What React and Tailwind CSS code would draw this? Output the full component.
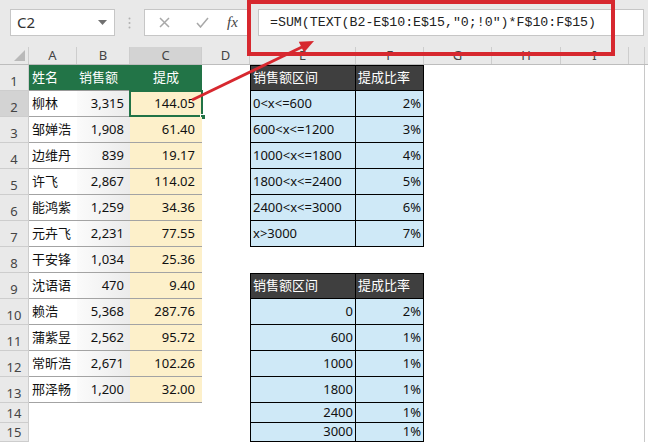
import clsx from "clsx";

const people = [
  ["柳林", "3,315", "144.05"],
  ["邹婵浩", "1,908", "61.40"],
  ["边维丹", "839", "19.17"],
  ["许飞", "2,867", "114.02"],
  ["能鸿紫", "1,259", "34.36"],
  ["元卉飞", "2,231", "77.55"],
  ["干安锋", "1,034", "25.36"],
  ["沈语语", "470", "9.40"],
  ["赖浩", "5,368", "287.76"],
  ["蒲紫昱", "2,562", "95.72"],
  ["常昕浩", "2,671", "102.26"],
  ["邢泽畅", "1,200", "32.00"],
];

const bands = [
  ["0<x<=600", "2%"],
  ["600<x<=1200", "3%"],
  ["1000<x<=1800", "4%"],
  ["1800<x<=2400", "5%"],
  ["2400<x<=3000", "6%"],
  ["x>3000", "7%"],
];

const steps = [
  ["0", "2%"],
  ["600", "1%"],
  ["1000", "1%"],
  ["1800", "1%"],
  ["2400", "1%"],
  ["3000", "1%"],
];

const rows = [1, 2, 3, 4, 5, 6, 7, 8, 9, 10, 11, 12, 13, 14, 15];

function RowHead({ n }) {
  return (
    <div
      className={clsx(
        "w-[29px] shrink-0 border-r border-b border-[#cdcdcd] flex items-end justify-center pb-[2px] text-[13px] leading-none text-[#444]",
        n === 2 ? "bg-[#d3d3d3]" : "bg-[#e9e9e9]"
      )}
    >
      {n}
    </div>
  );
}

function PeopleCells({ r }) {
  if (r === 1) {
    return (
      <>
        <div className="w-[48px] shrink-0 bg-[#227447] text-white border-b border-[#9a9a9a] flex items-center pl-[3px]">姓名</div>
        <div className="w-[53px] shrink-0 bg-[#227447] text-white border-b border-[#9a9a9a] flex items-center pl-[2px]">销售额</div>
        <div className="w-[72px] shrink-0 bg-[#227447] text-white border-b border-[#9a9a9a] flex items-center justify-center">提成</div>
      </>
    );
  }
  const p = people[r - 2];
  if (!p) {
    return (
      <>
        <div className="w-[48px] shrink-0" />
        <div className="w-[53px] shrink-0" />
        <div className="w-[72px] shrink-0" />
      </>
    );
  }
  return (
    <>
      <div className="w-[48px] shrink-0 bg-white border-b border-[#a3a3a3] flex items-center pl-[3px]">{p[0]}</div>
      <div className="w-[53px] shrink-0 bg-gradient-to-r from-[#fbfbfb] to-[#ebebeb] border-b border-[#a3a3a3] flex items-center justify-end pr-[6px]">{p[1]}</div>
      <div className="w-[72px] shrink-0 relative bg-[#fdf0ca] border-b border-[#a3a3a3] flex items-center justify-end pr-[7px]">
        {p[2]}
        {r === 2 && (
          <>
            <div className="absolute inset-[-1px] border-2 border-[#217346]" />
            <div className="absolute right-[-4px] bottom-[-4px] w-[6px] h-[6px] bg-[#217346] border border-white" />
          </>
        )}
      </div>
    </>
  );
}

function RateCells({ r }) {
  if (r === 1 || r === 9) {
    return (
      <>
        <div className="w-[106px] shrink-0 bg-[#3f3f3f] text-white border border-black flex items-center pl-[2px]">销售额区间</div>
        <div className="w-[68px] shrink-0 bg-[#3f3f3f] text-white border-y border-r border-black flex items-center pl-[2px]">提成比率</div>
      </>
    );
  }
  if (r >= 2 && r <= 7) {
    const b = bands[r - 2];
    return (
      <>
        <div className="w-[106px] shrink-0 bg-[#cfe9f7] border-x border-b border-black flex items-center pl-[2px]">{b[0]}</div>
        <div className="w-[68px] shrink-0 bg-[#cfe9f7] border-r border-b border-black flex items-center justify-end pr-[2px]">{b[1]}</div>
      </>
    );
  }
  if (r >= 10) {
    const s = steps[r - 10];
    return (
      <>
        <div className="w-[106px] shrink-0 bg-[#cfe9f7] border-x border-b border-black flex items-center justify-end pr-[2px]">{s[0]}</div>
        <div className="w-[68px] shrink-0 bg-[#cfe9f7] border-r border-b border-black flex items-center justify-end pr-[2px]">{s[1]}</div>
      </>
    );
  }
  return (
    <>
      <div className="w-[106px] shrink-0" />
      <div className="w-[68px] shrink-0" />
    </>
  );
}

export default function App() {
  return (
    <div className="relative w-[648px] h-[444px] overflow-hidden bg-white text-[13px] text-[#111] font-['Noto_Sans','Noto_Sans_CJK_SC',sans-serif]">
      {/* name box + formula bar */}
      <div className="h-[47px] bg-[#e9e9e9] flex items-start pt-[9px]">
        <div className="ml-[10px] w-[105px] h-[27px] bg-white border border-[#c6c6c6] flex items-center justify-between pl-[6px] pr-[7px]">
          <span className="text-[15px] text-[#333]">C2</span>
          <svg width="9" height="5" viewBox="0 0 9 5">
            <path d="M0 0h9L4.5 5z" fill="#707070" />
          </svg>
        </div>
        <div className="w-[29px] h-[27px] flex items-center justify-center">
          <svg width="3" height="12" viewBox="0 0 3 12">
            <circle cx="1.5" cy="1.5" r="1" fill="#b0b0b0" />
            <circle cx="1.5" cy="6" r="1" fill="#b0b0b0" />
            <circle cx="1.5" cy="10.5" r="1" fill="#b0b0b0" />
          </svg>
        </div>
        <div className="w-[104px] h-[27px] bg-white border border-[#c6c6c6] flex items-center pl-[14px]">
          <svg width="11" height="11" viewBox="0 0 11 11">
            <path d="M1 1l9 9M10 1l-9 9" stroke="#a8a8a8" strokeWidth="1.5" />
          </svg>
          <svg className="ml-[26px]" width="13" height="11" viewBox="0 0 13 11">
            <path d="M1 6l3.5 4L12 1" stroke="#a8a8a8" strokeWidth="1.5" fill="none" />
          </svg>
          <span className="ml-[18px] font-['Liberation_Serif',serif] italic text-[15px] text-[#444]">fx</span>
        </div>
        <div className="ml-[10px] mr-[4px] flex-1 h-[27px] bg-white border border-[#c6c6c6] flex items-center pl-[11px] font-['Liberation_Mono',monospace] text-[13.25px] text-[#222]">
          =SUM(TEXT(B2-E$10:E$15,"0;!0")*F$10:F$15)
        </div>
      </div>

      {/* column headers */}
      <div className="h-[18px] flex bg-[#e9e9e9] border-b border-[#bdbdbd] text-[13px] leading-none text-[#444]">
        <div className="w-[29px] shrink-0 border-r border-[#cdcdcd] flex items-end justify-end pr-[3px] pb-[3px]">
          <svg width="11" height="11" viewBox="0 0 11 11">
            <path d="M11 0v11H0z" fill="#b9b9b9" />
          </svg>
        </div>
        <div className="w-[48px] shrink-0 border-r border-[#cdcdcd] flex items-center justify-center">A</div>
        <div className="w-[53px] shrink-0 border-r border-[#cdcdcd] flex items-center justify-center">B</div>
        <div className="w-[72px] shrink-0 border-r border-[#cdcdcd] bg-[#d3d3d3] flex items-center justify-center">C</div>
        <div className="w-[48px] shrink-0 border-r border-[#cdcdcd] flex items-center justify-center">D</div>
        <div className="w-[106px] shrink-0 border-r border-[#cdcdcd] flex items-center justify-center">E</div>
        <div className="w-[68px] shrink-0 border-r border-[#cdcdcd] flex items-center justify-center">F</div>
        <div className="w-[68px] shrink-0 border-r border-[#cdcdcd] flex items-center justify-center">G</div>
        <div className="w-[69px] shrink-0 border-r border-[#cdcdcd] flex items-center justify-center">H</div>
        <div className="w-[68px] shrink-0 border-r border-[#cdcdcd] flex items-center justify-center">I</div>
        <div className="flex-1 border-r border-[#cdcdcd] mr-[3px]" />
      </div>

      {/* grid rows */}
      {rows.map((r) => (
        <div
          key={r}
          className={clsx("flex", r <= 13 ? "h-[26px]" : r === 14 ? "h-[20px]" : "h-[19px]")}
        >
          <RowHead n={r} />
          <PeopleCells r={r} />
          <div className="w-[48px] shrink-0" />
          <RateCells r={r} />
          <div className="flex-1 border-r border-[#c8c8c8] mr-[3px]" />
        </div>
      ))}

      {/* annotation: red frame and arrow */}
      <div className="absolute left-[247px] top-0 w-[368px] h-[56px] border-4 border-[#d7282f]" />
      <svg className="absolute inset-0 pointer-events-none" width="648" height="444" viewBox="0 0 648 444">
        <line x1="192" y1="100" x2="302" y2="47" stroke="#d7282f" strokeWidth="3" />
        <path d="M314 41L304 52.5L298.8 41.7z" fill="#d7282f" />
      </svg>
    </div>
  );
}
